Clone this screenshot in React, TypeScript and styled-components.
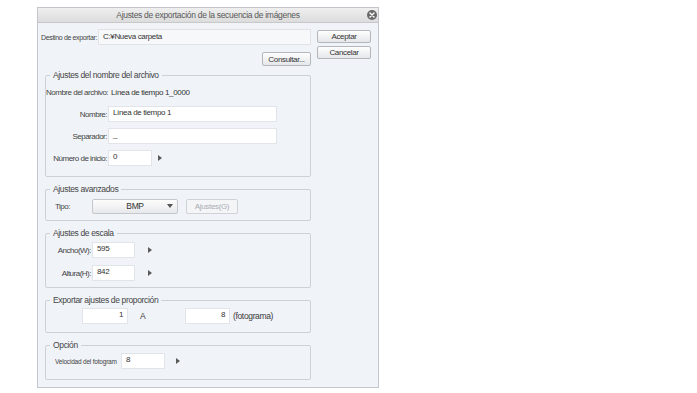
import React from 'react';
import styled, { createGlobalStyle } from 'styled-components';

const Global = createGlobalStyle`
  html, body { margin: 0; padding: 0; background: #ffffff; }
  body {
    font-family: "Liberation Sans", Arial, sans-serif;
    color: #3c3c3c;
    letter-spacing: -0.35px;
  }
  * { box-sizing: border-box; }
`;

const Page = styled.div`
  padding: 7px 0 0 37px;
`;

const Dialog = styled.div`
  width: 342px;
  height: 381px;
  border: 1px solid #c2c5ca;
  background: #f0f3f8;
  display: flex;
  flex-direction: column;
`;

const TitleBar = styled.div`
  height: 15px;
  flex: none;
  display: grid;
  grid-template-columns: 1fr auto 1fr;
  align-items: center;
  background: linear-gradient(#efefef, #dcdcdc);
  border-bottom: 1px solid #c8c8c8;
`;

const Title = styled.div`
  grid-column: 2;
  font-size: 8.5px;
  letter-spacing: -0.3px;
  color: #595959;
  white-space: nowrap;
`;

const Close = styled.div`
  grid-column: 3;
  justify-self: end;
  margin-right: 1px;
  width: 10px;
  height: 10px;
  border-radius: 50%;
  background: #6a6a6a;
  display: flex;
  align-items: center;
  justify-content: center;
`;

const Body = styled.div`
  display: flex;
  gap: 6px;
  padding: 6px 7px 0 3px;
`;

const Main = styled.div`
  width: 270px;
  display: flex;
  flex-direction: column;
`;

const Side = styled.div`
  width: 54px;
  display: flex;
  flex-direction: column;
  gap: 3px;
  padding-top: 1px;
`;

const DestRow = styled.div`
  display: flex;
  align-items: center;
  height: 16px;
`;

const SmallLabel = styled.span<{ $w: number }>`
  width: ${p => p.$w}px;
  flex: none;
  font-size: 7px;
  letter-spacing: -0.35px;
  color: #444;
  white-space: nowrap;
`;

const DestInput = styled.div`
  flex: 1;
  height: 16px;
  background: #f7f8fa;
  border: 1px solid #dfe2e6;
  font-size: 8px;
  line-height: 14px;
  padding-left: 4px;
  color: #333;
`;

const Button = styled.div<{ $w?: number; $h?: number; $disabled?: boolean }>`
  width: ${p => (p.$w ? `${p.$w}px` : '100%')};
  height: ${p => p.$h ?? 13}px;
  flex: none;
  display: flex;
  align-items: center;
  justify-content: center;
  font-size: 8px;
  border-radius: 2px;
  color: ${p => (p.$disabled ? '#a9adb3' : '#333')};
  border: 1px solid ${p => (p.$disabled ? '#cfd3d8' : '#b3b6bb')};
  background: ${p => (p.$disabled ? '#f4f5f7' : 'linear-gradient(#fefefe, #e6e7ea)')};
`;

const ConsultRow = styled.div`
  display: flex;
  justify-content: flex-end;
  margin-top: 7px;
`;

const Groups = styled.div`
  display: flex;
  flex-direction: column;
  gap: 7px;
  margin: 4px 0 0 4px;
  width: 266px;
`;

const Group = styled.fieldset<{ $pt: number; $pb: number }>`
  margin: 0;
  min-width: 0;
  border: 1px solid #cdd1d6;
  border-radius: 2px;
  padding: ${p => p.$pt}px 0 ${p => p.$pb}px 0;
  display: flex;
  flex-direction: column;
`;

const Legend = styled.legend`
  margin-left: 4px;
  padding: 0 3px;
  font-size: 8.5px;
  line-height: 10px;
  color: #454545;
`;

const Rows = styled.div<{ $gap: number }>`
  display: flex;
  flex-direction: column;
  gap: ${p => p.$gap}px;
`;

const Row = styled.div<{ $pl?: number }>`
  display: flex;
  align-items: center;
  height: 16px;
  padding-left: ${p => p.$pl ?? 0}px;
`;

const Label = styled.span<{ $w: number; $right?: boolean; $size?: number }>`
  width: ${p => p.$w}px;
  flex: none;
  text-align: ${p => (p.$right ? 'right' : 'left')};
  font-size: ${p => p.$size ?? 8}px;
  letter-spacing: ${p => (p.$size ? '-0.2px' : '-0.5px')};
  color: #444;
  white-space: nowrap;
  padding-right: 1px;
`;

const Value = styled.span`
  font-size: 8px;
  color: #333;
  white-space: nowrap;
  margin-left: 3px;
`;

const Field = styled.div<{ $w: number; $right?: boolean; $h?: number }>`
  width: ${p => p.$w}px;
  height: ${p => p.$h ?? 16}px;
  flex: none;
  background: #ffffff;
  border: 1px solid #e1e4e8;
  font-size: 8px;
  line-height: ${p => (p.$h ?? 16) - 4}px;
  color: #333;
  padding: 0 4px;
  text-align: ${p => (p.$right ? 'right' : 'left')};
`;

const Arrow = styled.span<{ $ml: number }>`
  margin-left: ${p => p.$ml}px;
  width: 0;
  height: 0;
  border-top: 3px solid transparent;
  border-bottom: 3px solid transparent;
  border-left: 4px solid #5a5a5a;
`;

const Select = styled.div`
  width: 86px;
  height: 15px;
  flex: none;
  display: flex;
  align-items: center;
  border: 1px solid #c4c7cc;
  border-radius: 2px;
  background: linear-gradient(#fdfdfd, #e7e8eb);
  font-size: 8.5px;
  color: #333;
`;

const SelectText = styled.span`
  flex: 1;
  text-align: center;
  padding-left: 10px;
`;

const SelectCaret = styled.span`
  margin-right: 4px;
  width: 0;
  height: 0;
  border-left: 3px solid transparent;
  border-right: 3px solid transparent;
  border-top: 4px solid #555;
`;

const Slot = styled.span<{ $ml: number; $w?: number }>`
  margin-left: ${p => p.$ml}px;
  ${p => (p.$w ? `width: ${p.$w}px; flex: none;` : '')}
  font-size: 8.5px;
  color: #3a3a3a;
  white-space: nowrap;
`;

export default function App() {
  return (
    <>
      <Global />
      <Page>
        <Dialog>
          <TitleBar>
            <Title>Ajustes de exportación de la secuencia de imágenes</Title>
            <Close>
              <svg width="6" height="6" viewBox="0 0 6 6">
                <path d="M1 1 L5 5 M5 1 L1 5" stroke="#fff" strokeWidth="1.4" strokeLinecap="round" />
              </svg>
            </Close>
          </TitleBar>
          <Body>
            <Main>
              <DestRow>
                <SmallLabel $w={57}>Destino de exportar:</SmallLabel>
                <DestInput>C:¥Nueva carpeta</DestInput>
              </DestRow>
              <ConsultRow>
                <Button $w={49} $h={14}>Consultar...</Button>
              </ConsultRow>
              <Groups>
                <Group $pt={4} $pb={10}>
                  <Legend>Ajustes del nombre del archivo</Legend>
                  <Rows $gap={6}>
                    <Row>
                      <Label $w={62} $right>Nombre del archivo:</Label>
                      <Value>Línea de tiempo 1_0000</Value>
                    </Row>
                    <Row>
                      <Label $w={62} $right>Nombre:</Label>
                      <Field $w={169}>Línea de tiempo 1</Field>
                    </Row>
                    <Row>
                      <Label $w={62} $right>Separador:</Label>
                      <Field $w={169}>_</Field>
                    </Row>
                    <Row>
                      <Label $w={62} $right>Número de inicio:</Label>
                      <Field $w={44}>0</Field>
                      <Arrow $ml={6} />
                    </Row>
                  </Rows>
                </Group>
                <Group $pt={4} $pb={6}>
                  <Legend>Ajustes avanzados</Legend>
                  <Row $pl={9}>
                    <Label $w={37}>Tipo:</Label>
                    <Select>
                      <SelectText>BMP</SelectText>
                      <SelectCaret />
                    </Select>
                    <Slot $ml={8}>
                      <Button $w={52} $h={15} $disabled>Ajustes(G)</Button>
                    </Slot>
                  </Row>
                </Group>
                <Group $pt={4} $pb={6}>
                  <Legend>Ajustes de escala</Legend>
                  <Rows $gap={7}>
                    <Row $pl={9}>
                      <Label $w={37} $right>Ancho(W):</Label>
                      <Field $w={43}>595</Field>
                      <Arrow $ml={13} />
                    </Row>
                    <Row $pl={9}>
                      <Label $w={37} $right>Altura(H):</Label>
                      <Field $w={43}>842</Field>
                      <Arrow $ml={13} />
                    </Row>
                  </Rows>
                </Group>
                <Group $pt={3} $pb={8}>
                  <Legend>Exportar ajustes de proporción</Legend>
                  <Row $pl={36}>
                    <Field $w={46} $right>1</Field>
                    <Slot $ml={12} $w={45}>A</Slot>
                    <Field $w={45} $right>8</Field>
                    <Slot $ml={3}>(fotograma)</Slot>
                  </Row>
                </Group>
                <Group $pt={3} $pb={10}>
                  <Legend>Opción</Legend>
                  <Row $pl={9}>
                    <Label $w={66} $size={6.5}>Velocidad del fotogram</Label>
                    <Field $w={44}>8</Field>
                    <Arrow $ml={11} />
                  </Row>
                </Group>
              </Groups>
            </Main>
            <Side>
              <Button $h={13}>Aceptar</Button>
              <Button $h={13}>Cancelar</Button>
            </Side>
          </Body>
        </Dialog>
      </Page>
    </>
  );
}
